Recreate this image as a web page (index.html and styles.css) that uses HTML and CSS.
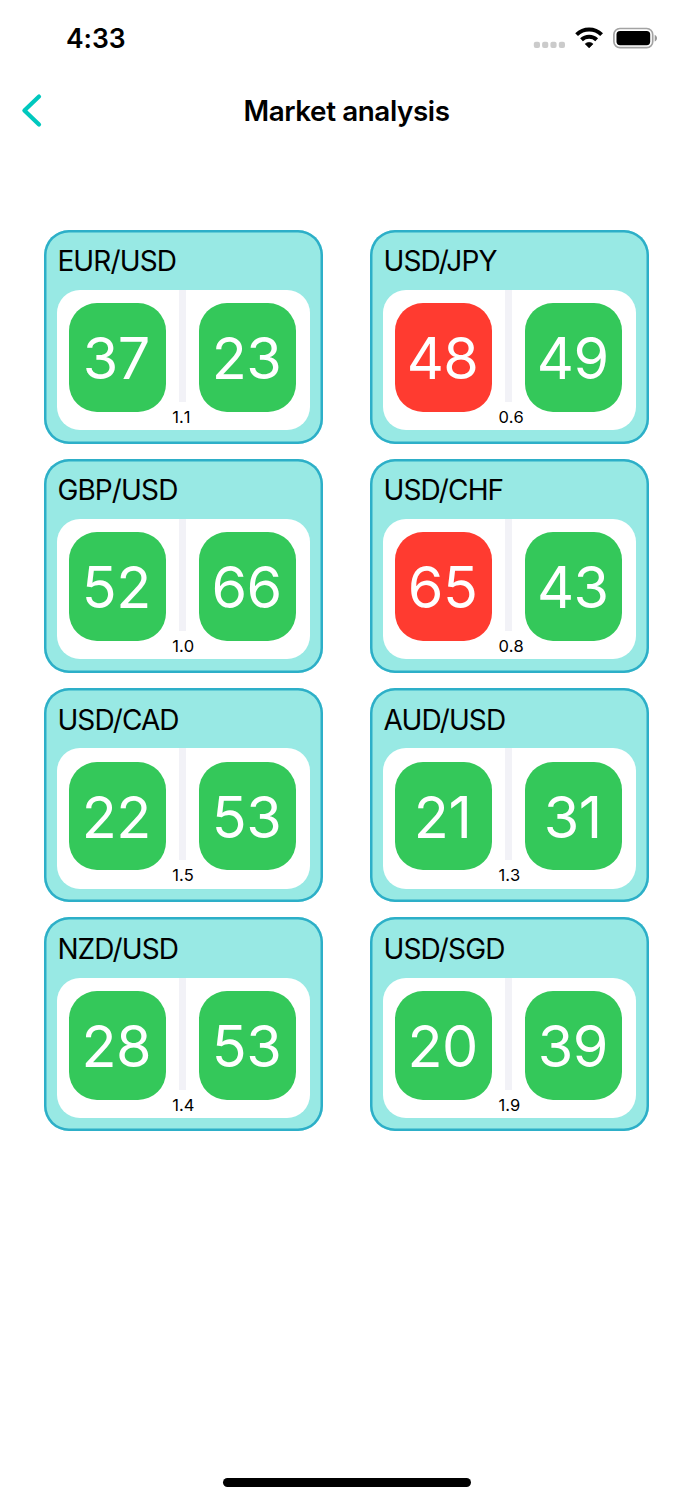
FILE: index.html
```html
<!DOCTYPE html>
<html lang="en">
<head>
<meta charset="utf-8">
<title>Market analysis</title>
<link rel="stylesheet" href="styles.css">
</head>
<body>
<div class="screen">
  <header class="status">
    <span class="time">4:33</span>
    <svg class="status-icons" width="126" height="24" viewBox="0 0 126 24">
      <g fill="#cbcbcb">
        <rect x=".8" y="15.8" width="6.2" height="6.2" rx="2"/>
        <rect x="9.1" y="15.8" width="6.2" height="6.2" rx="2"/>
        <rect x="17.4" y="15.8" width="6.2" height="6.2" rx="2"/>
        <rect x="25.8" y="15.8" width="6.2" height="6.2" rx="2"/>
      </g>
      <g fill="none" stroke="#000" stroke-width="4">
        <path d="M43.6 8.6a18 18 0 0 1 25 0"/>
        <path d="M48.5 13.8a11 11 0 0 1 15.2 0"/>
      </g>
      <path d="M52.1 17.9a6 6 0 0 1 8 0L56.1 21.9z" stroke="#000" stroke-width=".5" stroke-linejoin="round"/>
      <rect x="80.9" y="2.5" width="38.8" height="19.2" rx="6" fill="none" stroke="#a3a3a3" stroke-width="1.7"/>
      <rect x="83.5" y="5" width="33.7" height="14.2" rx="3.6"/>
      <path d="M121.7 8.7c3.1 1.4 3.1 5.4 0 6.8z" fill="#999"/>
    </svg>
  </header>
  <nav class="nav">
    <svg class="back" width="24" height="36" viewBox="0 0 24 36"><path d="M19 3.6 4.4 17.5 19 31.6" fill="none" stroke="#00c8be" stroke-width="4.2" stroke-linecap="round" stroke-linejoin="round"/></svg>
    <h1 class="title">Market analysis</h1>
  </nav>
  <main class="grid">
    <section class="card"><h2 class="pair">EUR/USD</h2><div class="panel"><div class="tile">37</div><div class="mid"><i class="bar"></i><span class="spread">1.1</span></div><div class="tile">23</div></div></section>
    <section class="card"><h2 class="pair">USD/JPY</h2><div class="panel"><div class="tile down">48</div><div class="mid"><i class="bar"></i><span class="spread">0.6</span></div><div class="tile">49</div></div></section>
    <section class="card"><h2 class="pair">GBP/USD</h2><div class="panel"><div class="tile">52</div><div class="mid"><i class="bar"></i><span class="spread">1.0</span></div><div class="tile">66</div></div></section>
    <section class="card"><h2 class="pair">USD/CHF</h2><div class="panel"><div class="tile down">65</div><div class="mid"><i class="bar"></i><span class="spread">0.8</span></div><div class="tile">43</div></div></section>
    <section class="card"><h2 class="pair">USD/CAD</h2><div class="panel"><div class="tile">22</div><div class="mid"><i class="bar"></i><span class="spread">1.5</span></div><div class="tile">53</div></div></section>
    <section class="card"><h2 class="pair">AUD/USD</h2><div class="panel"><div class="tile">21</div><div class="mid"><i class="bar"></i><span class="spread">1.3</span></div><div class="tile">31</div></div></section>
    <section class="card"><h2 class="pair">NZD/USD</h2><div class="panel"><div class="tile">28</div><div class="mid"><i class="bar"></i><span class="spread">1.4</span></div><div class="tile">53</div></div></section>
    <section class="card"><h2 class="pair">USD/SGD</h2><div class="panel"><div class="tile">20</div><div class="mid"><i class="bar"></i><span class="spread">1.9</span></div><div class="tile">39</div></div></section>
  </main>
  <footer class="home"><div class="home-bar"></div></footer>
</div>
</body>
</html>
```
FILE: styles.css
```css
* { box-sizing: border-box; margin: 0; }
body { background: #fff; color: #000; font-family: Inter, "Liberation Sans", sans-serif; }
.screen { width: 693px; height: 1500px; display: flex; flex-direction: column; overflow: hidden; }
.status { height: 75px; display: flex; justify-content: space-between; align-items: center; padding: 0 34px 0 66px; }
.time { font-size: 26.5px; font-weight: 600; line-height: 32px; letter-spacing: -0.1px; }
.nav { height: 71px; display: grid; grid-template-columns: 60px 1fr 60px; align-items: center; }
.back { margin-left: 20px; }
.title { font-size: 27.8px; font-weight: 560; line-height: 34px; text-align: center; letter-spacing: -0.4px; padding-top: 1px; }
.grid { display: grid; grid-template-columns: 279.4px 279.4px; column-gap: 46.8px; row-gap: 15.3px; padding: 83.5px 0 0 43.7px; }
.card { height: 214px; box-shadow: inset 0 0 0 2.5px #2dafc8; border-radius: 25px; background: #98e9e4; padding: 12.5px 13.2px; }
.pair { height: 47.7px; padding: 1px 0 0 0.5px; font-size: 28px; line-height: 37px; font-weight: 400; letter-spacing: -0.87px; white-space: nowrap; }
.panel { height: 140.5px; width: 253px; background: #fff; border-radius: 23px; display: flex; padding: 0 13px 0 12px; }
.tile { width: 97px; height: 108.7px; margin-top: 13.4px; padding: 1px 2px 0 0; border-radius: 28px; background: #34c85a; color: #fff; font-size: 57.5px; font-weight: 400; line-height: 109px; text-align: center; letter-spacing: -0.5px; font-kerning: none; flex: none; }
.down { background: #ff3b30; }
.mid { width: 33.2px; display: flex; flex-direction: column; flex: none; }
.bar { width: 7px; height: 112px; margin-left: 13px; background: #f2f2f7; }
.spread { margin: 5px 0 0 6.4px; font-size: 16.5px; line-height: 20px; letter-spacing: 0; font-kerning: none; white-space: nowrap; }
.home { margin-top: auto; height: 22px; display: flex; justify-content: center; }
.home-bar { width: 248px; height: 8.5px; border-radius: 5px; background: #000; }
```
